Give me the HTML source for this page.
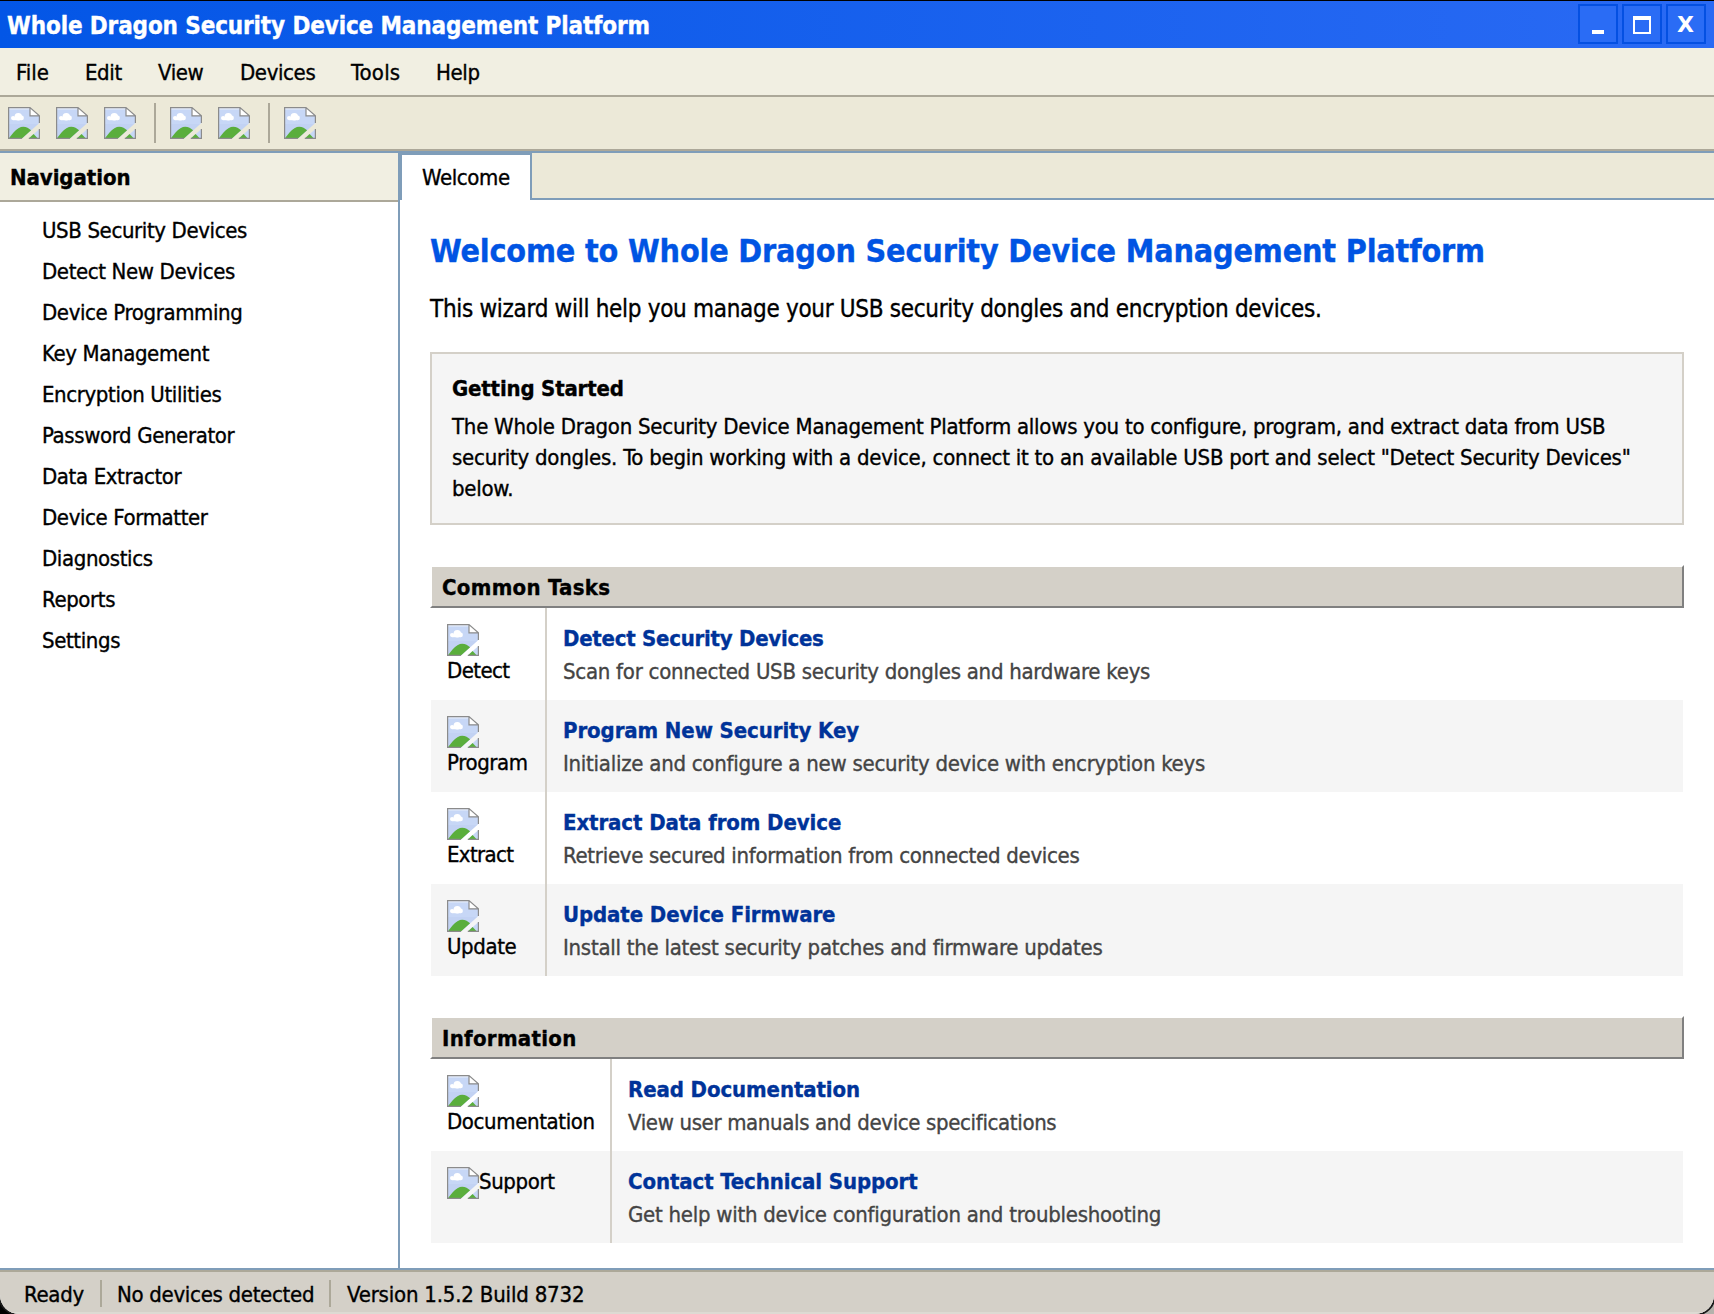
<!DOCTYPE html>
<html lang="en">
<head>
<meta charset="utf-8">
<title>Whole Dragon Security Device Management Platform</title>
<style>
*{box-sizing:border-box;margin:0;padding:0}
html,body{width:1714px;height:1314px;overflow:hidden;background:#000}
body{font-family:"DejaVu Sans Condensed","DejaVu Sans","Liberation Sans",sans-serif;font-stretch:condensed;font-size:22px;line-height:26px;color:#000;letter-spacing:-0.38px;-webkit-text-stroke:0.35px}
#win{position:absolute;left:0;top:0;width:1714px;height:1314px;background:#fff;overflow:hidden;border-radius:0 0 19px 19px;box-shadow:0 0 0 2px #1a1a1a}
.abs{position:absolute;white-space:nowrap}
b,.b{font-weight:bold}
/* title bar */
#title{position:absolute;left:0;top:1px;width:1714px;height:47px;background:linear-gradient(to right,#0356e6 0%,#2a6af4 100%)}
#title .txt{position:absolute;left:7px;top:11px;font-size:24px;line-height:28px;font-weight:bold;color:#fff;letter-spacing:-0.13px;white-space:nowrap;}
.wb{position:absolute;top:3px;width:40px;height:40px;border:2px solid #0450e2;background:#2a6cf5}
/* menu */
#menu{position:absolute;left:0;top:48px;width:1714px;height:49px;background:#f1efe2;border-bottom:2px solid #aca899}
#menu span{position:absolute;top:12px;line-height:26px;white-space:nowrap}
/* toolbar */
#tool{position:absolute;left:0;top:97px;width:1714px;height:54px;background:#ece9d8;border-bottom:2px solid #aca899}
#tool svg{position:absolute;top:10px;width:32px;height:32px}
#tool i{position:absolute;top:6px;width:2px;height:40px;background:#aca899}
/* main */
#main{position:absolute;left:0;top:151px;width:1714px;height:1117px;border-top:2px solid #7f9db9;background:#fff}
#nav{position:absolute;left:0;top:0;width:400px;height:1115px;border-right:2px solid #7f9db9;background:#fff}
#navh{position:absolute;left:0;top:0;width:398px;height:49px;background:#f1efe2;border-bottom:2px solid #aca899}
#navh span{position:absolute;left:10px;top:12px;font-weight:bold;white-space:nowrap;letter-spacing:-0.06px}
#nav ul{position:absolute;left:0;top:57px;list-style:none}
#nav li{height:41px;padding-left:42px;line-height:41px;white-space:nowrap}
#tabs{position:absolute;left:400px;top:0;width:1314px;height:47px;background:#ece9d8;border-bottom:2px solid #7f9db9}
#tab{position:absolute;left:400px;top:0;width:132px;height:47px;background:#fff;border:2px solid #7f9db9;border-bottom:none}
#tab span{position:absolute;left:20px;top:10px;white-space:nowrap}
#content{position:absolute;left:400px;top:47px;width:1314px;height:1068px;background:#fff}
/* status */
#status{position:absolute;left:0;top:1268px;width:1714px;height:46px;background:#d4d0c8;border-top:2px solid #7f9db9}
#status:before{content:"";position:absolute;left:0;top:0;width:100%;height:2px;background:#aca899}
#status:after{content:"";position:absolute;left:0;bottom:0;width:100%;height:2px;background:#dddad3}
#status span{position:absolute;top:12px;white-space:nowrap;letter-spacing:-0.3px}
#status i{position:absolute;top:10px;width:2px;height:27px;background:#aca899}

h1{font-size:32px;line-height:40px;font-weight:bold;color:#0054e3;letter-spacing:-0.18px}
.intro{font-size:24px;line-height:30px;letter-spacing:-0.3px}
#gs{position:absolute;left:30px;top:152px;width:1254px;height:173px;background:#f5f5f5;border:2px solid #d4d0c8}
.gsb{line-height:30.8px;letter-spacing:-0.25px}
.sh{position:absolute;left:30px;width:1254px;height:43px;background:#d4d0c8;border:2px solid;border-color:#fff #808080 #808080 #fff}
.sh span{position:absolute;left:10px;top:8px;font-weight:bold;white-space:nowrap;letter-spacing:0.3px}
.row{position:absolute;left:31px;width:1252px;height:92px;background:#fff}
.row.alt{background:#f5f5f5}
.ic{position:absolute;left:0;top:0;height:92px;border-right:2px solid #d4d0c8}
.ic svg{position:absolute;left:16px;top:16px;width:32px;height:32px}
.ic span{position:absolute;left:16px;top:50px;white-space:nowrap}
.tx{position:absolute;top:0;height:92px}
.tx b{position:absolute;left:16px;top:18px;color:#003399;white-space:nowrap;letter-spacing:-0.1px}
.tx span{position:absolute;left:16px;top:51px;color:#444;white-space:nowrap;letter-spacing:-0.26px}
</style>
</head>
<body>
<div style="position:absolute;right:0;bottom:0;width:24px;height:24px;background:#b4b2ac"></div>
<div id="win">
<div style="position:absolute;left:0;top:0;width:1714px;height:1px;background:#000"></div>
<div id="title"><div class="txt">Whole Dragon Security Device Management Platform</div>
<div class="wb" style="left:1578px"><div style="position:absolute;left:12px;top:24px;width:12px;height:4px;background:#fff"></div></div>
<div class="wb" style="left:1622px"><div style="position:absolute;left:9px;top:10px;width:18px;height:18px;border:2px solid #fff;border-top-width:4px"></div></div>
<div class="wb" style="left:1666px"><div style="position:absolute;left:9px;top:6px;font-family:'DejaVu Sans',sans-serif;font-stretch:normal;font-size:22px;line-height:26px;font-weight:bold;color:#fff;letter-spacing:0;-webkit-text-stroke:0">X</div></div>
</div>
<div id="menu">
<span style="left:16px;letter-spacing:0px">File</span><span style="left:85px">Edit</span><span style="left:158px">View</span><span style="left:240px">Devices</span><span style="left:351px;letter-spacing:0.2px">Tools</span><span style="left:436px">Help</span>
</div>
<div id="tool">
<svg style="left:8px" viewBox="0 0 32 32"><path d="M0.6,0.6 H22 L31.4,8.8 V15.9 L13.9,31.4 H0.6 Z" fill="#c7d7f6"/><path d="M31.4,22 V31.4 H20.8 Z" fill="#c7d7f6"/><path d="M1,17 H30 L14,31.4 H1 Z" fill="#b9c9ef" opacity="0.35"/><path d="M1.2,1.2 H21.5 V2.4 H1.2 Z" fill="#eef3fd"/><g fill="#fff"><circle cx="5.1" cy="11.1" r="2.1"/><circle cx="10.3" cy="9.8" r="3.8"/><circle cx="13.6" cy="10.9" r="2.3"/><rect x="5.1" y="11" width="8.5" height="2.2"/></g><path d="M0.8,31.4 C5,26.4 9,20 15.2,19.8 C18.4,19.8 21,21.4 23.1,23.3 L13.9,31.4 Z" fill="#5aae3c"/><path d="M20.8,31.4 L25.6,27.1 L29.9,31.4 Z" fill="#5aae3c"/><path d="M22,0.6 V8.8 H31.4 Z" fill="#fff"/><path d="M13.9,31.4 H0.6 V0.6 H22 L31.4,8.8 V15.9 M22,0.6 V8.8 H31.4 M31.4,22 V31.4 H20.8" fill="none" stroke="#8b8b8b" stroke-width="1.2"/></svg><svg style="left:56px" viewBox="0 0 32 32"><path d="M0.6,0.6 H22 L31.4,8.8 V15.9 L13.9,31.4 H0.6 Z" fill="#c7d7f6"/><path d="M31.4,22 V31.4 H20.8 Z" fill="#c7d7f6"/><path d="M1,17 H30 L14,31.4 H1 Z" fill="#b9c9ef" opacity="0.35"/><path d="M1.2,1.2 H21.5 V2.4 H1.2 Z" fill="#eef3fd"/><g fill="#fff"><circle cx="5.1" cy="11.1" r="2.1"/><circle cx="10.3" cy="9.8" r="3.8"/><circle cx="13.6" cy="10.9" r="2.3"/><rect x="5.1" y="11" width="8.5" height="2.2"/></g><path d="M0.8,31.4 C5,26.4 9,20 15.2,19.8 C18.4,19.8 21,21.4 23.1,23.3 L13.9,31.4 Z" fill="#5aae3c"/><path d="M20.8,31.4 L25.6,27.1 L29.9,31.4 Z" fill="#5aae3c"/><path d="M22,0.6 V8.8 H31.4 Z" fill="#fff"/><path d="M13.9,31.4 H0.6 V0.6 H22 L31.4,8.8 V15.9 M22,0.6 V8.8 H31.4 M31.4,22 V31.4 H20.8" fill="none" stroke="#8b8b8b" stroke-width="1.2"/></svg><svg style="left:104px" viewBox="0 0 32 32"><path d="M0.6,0.6 H22 L31.4,8.8 V15.9 L13.9,31.4 H0.6 Z" fill="#c7d7f6"/><path d="M31.4,22 V31.4 H20.8 Z" fill="#c7d7f6"/><path d="M1,17 H30 L14,31.4 H1 Z" fill="#b9c9ef" opacity="0.35"/><path d="M1.2,1.2 H21.5 V2.4 H1.2 Z" fill="#eef3fd"/><g fill="#fff"><circle cx="5.1" cy="11.1" r="2.1"/><circle cx="10.3" cy="9.8" r="3.8"/><circle cx="13.6" cy="10.9" r="2.3"/><rect x="5.1" y="11" width="8.5" height="2.2"/></g><path d="M0.8,31.4 C5,26.4 9,20 15.2,19.8 C18.4,19.8 21,21.4 23.1,23.3 L13.9,31.4 Z" fill="#5aae3c"/><path d="M20.8,31.4 L25.6,27.1 L29.9,31.4 Z" fill="#5aae3c"/><path d="M22,0.6 V8.8 H31.4 Z" fill="#fff"/><path d="M13.9,31.4 H0.6 V0.6 H22 L31.4,8.8 V15.9 M22,0.6 V8.8 H31.4 M31.4,22 V31.4 H20.8" fill="none" stroke="#8b8b8b" stroke-width="1.2"/></svg>
<i style="left:154px"></i>
<svg style="left:170px" viewBox="0 0 32 32"><path d="M0.6,0.6 H22 L31.4,8.8 V15.9 L13.9,31.4 H0.6 Z" fill="#c7d7f6"/><path d="M31.4,22 V31.4 H20.8 Z" fill="#c7d7f6"/><path d="M1,17 H30 L14,31.4 H1 Z" fill="#b9c9ef" opacity="0.35"/><path d="M1.2,1.2 H21.5 V2.4 H1.2 Z" fill="#eef3fd"/><g fill="#fff"><circle cx="5.1" cy="11.1" r="2.1"/><circle cx="10.3" cy="9.8" r="3.8"/><circle cx="13.6" cy="10.9" r="2.3"/><rect x="5.1" y="11" width="8.5" height="2.2"/></g><path d="M0.8,31.4 C5,26.4 9,20 15.2,19.8 C18.4,19.8 21,21.4 23.1,23.3 L13.9,31.4 Z" fill="#5aae3c"/><path d="M20.8,31.4 L25.6,27.1 L29.9,31.4 Z" fill="#5aae3c"/><path d="M22,0.6 V8.8 H31.4 Z" fill="#fff"/><path d="M13.9,31.4 H0.6 V0.6 H22 L31.4,8.8 V15.9 M22,0.6 V8.8 H31.4 M31.4,22 V31.4 H20.8" fill="none" stroke="#8b8b8b" stroke-width="1.2"/></svg><svg style="left:218px" viewBox="0 0 32 32"><path d="M0.6,0.6 H22 L31.4,8.8 V15.9 L13.9,31.4 H0.6 Z" fill="#c7d7f6"/><path d="M31.4,22 V31.4 H20.8 Z" fill="#c7d7f6"/><path d="M1,17 H30 L14,31.4 H1 Z" fill="#b9c9ef" opacity="0.35"/><path d="M1.2,1.2 H21.5 V2.4 H1.2 Z" fill="#eef3fd"/><g fill="#fff"><circle cx="5.1" cy="11.1" r="2.1"/><circle cx="10.3" cy="9.8" r="3.8"/><circle cx="13.6" cy="10.9" r="2.3"/><rect x="5.1" y="11" width="8.5" height="2.2"/></g><path d="M0.8,31.4 C5,26.4 9,20 15.2,19.8 C18.4,19.8 21,21.4 23.1,23.3 L13.9,31.4 Z" fill="#5aae3c"/><path d="M20.8,31.4 L25.6,27.1 L29.9,31.4 Z" fill="#5aae3c"/><path d="M22,0.6 V8.8 H31.4 Z" fill="#fff"/><path d="M13.9,31.4 H0.6 V0.6 H22 L31.4,8.8 V15.9 M22,0.6 V8.8 H31.4 M31.4,22 V31.4 H20.8" fill="none" stroke="#8b8b8b" stroke-width="1.2"/></svg>
<i style="left:268px"></i>
<svg style="left:284px" viewBox="0 0 32 32"><path d="M0.6,0.6 H22 L31.4,8.8 V15.9 L13.9,31.4 H0.6 Z" fill="#c7d7f6"/><path d="M31.4,22 V31.4 H20.8 Z" fill="#c7d7f6"/><path d="M1,17 H30 L14,31.4 H1 Z" fill="#b9c9ef" opacity="0.35"/><path d="M1.2,1.2 H21.5 V2.4 H1.2 Z" fill="#eef3fd"/><g fill="#fff"><circle cx="5.1" cy="11.1" r="2.1"/><circle cx="10.3" cy="9.8" r="3.8"/><circle cx="13.6" cy="10.9" r="2.3"/><rect x="5.1" y="11" width="8.5" height="2.2"/></g><path d="M0.8,31.4 C5,26.4 9,20 15.2,19.8 C18.4,19.8 21,21.4 23.1,23.3 L13.9,31.4 Z" fill="#5aae3c"/><path d="M20.8,31.4 L25.6,27.1 L29.9,31.4 Z" fill="#5aae3c"/><path d="M22,0.6 V8.8 H31.4 Z" fill="#fff"/><path d="M13.9,31.4 H0.6 V0.6 H22 L31.4,8.8 V15.9 M22,0.6 V8.8 H31.4 M31.4,22 V31.4 H20.8" fill="none" stroke="#8b8b8b" stroke-width="1.2"/></svg>
</div>
<div id="main">
<div id="nav">
<div id="navh"><span>Navigation</span></div>
<ul>
<li>USB Security Devices</li>
<li>Detect New Devices</li>
<li>Device Programming</li>
<li>Key Management</li>
<li>Encryption Utilities</li>
<li>Password Generator</li>
<li>Data Extractor</li>
<li>Device Formatter</li>
<li>Diagnostics</li>
<li>Reports</li>
<li>Settings</li>
</ul>
</div>
<div id="tabs"></div>
<div id="tab"><span>Welcome</span></div>
<div id="content">

<h1 class="abs" style="left:30px;top:31px">Welcome to Whole Dragon Security Device Management Platform</h1>
<p class="abs intro" style="left:30px;top:94px">This wizard will help you manage your USB security dongles and encryption devices.</p>
<div id="gs">
<div class="abs b" style="left:20px;top:22px;letter-spacing:-0.18px">Getting Started</div>
<div class="abs gsb" style="left:20px;top:58px">The Whole Dragon Security Device Management Platform allows you to configure, program, and extract data from USB<br>security dongles. To begin working with a device, connect it to an available USB port and select "Detect Security Devices"<br>below.</div>
</div>
<div class="sh" style="top:365px"><span>Common Tasks</span></div>
<div class="row" style="top:408px"><div class="ic" style="width:116px"><svg viewBox="0 0 32 32"><path d="M0.6,0.6 H22 L31.4,8.8 V15.9 L13.9,31.4 H0.6 Z" fill="#c7d7f6"/><path d="M31.4,22 V31.4 H20.8 Z" fill="#c7d7f6"/><path d="M1,17 H30 L14,31.4 H1 Z" fill="#b9c9ef" opacity="0.35"/><path d="M1.2,1.2 H21.5 V2.4 H1.2 Z" fill="#eef3fd"/><g fill="#fff"><circle cx="5.1" cy="11.1" r="2.1"/><circle cx="10.3" cy="9.8" r="3.8"/><circle cx="13.6" cy="10.9" r="2.3"/><rect x="5.1" y="11" width="8.5" height="2.2"/></g><path d="M0.8,31.4 C5,26.4 9,20 15.2,19.8 C18.4,19.8 21,21.4 23.1,23.3 L13.9,31.4 Z" fill="#5aae3c"/><path d="M20.8,31.4 L25.6,27.1 L29.9,31.4 Z" fill="#5aae3c"/><path d="M22,0.6 V8.8 H31.4 Z" fill="#fff"/><path d="M13.9,31.4 H0.6 V0.6 H22 L31.4,8.8 V15.9 M22,0.6 V8.8 H31.4 M31.4,22 V31.4 H20.8" fill="none" stroke="#8b8b8b" stroke-width="1.2"/></svg><span style="letter-spacing:-0.58px">Detect</span></div><div class="tx" style="left:116px"><b style="letter-spacing:-0.26px">Detect Security Devices</b><span>Scan for connected USB security dongles and hardware keys</span></div></div>
<div class="row alt" style="top:500px"><div class="ic" style="width:116px"><svg viewBox="0 0 32 32"><path d="M0.6,0.6 H22 L31.4,8.8 V15.9 L13.9,31.4 H0.6 Z" fill="#c7d7f6"/><path d="M31.4,22 V31.4 H20.8 Z" fill="#c7d7f6"/><path d="M1,17 H30 L14,31.4 H1 Z" fill="#b9c9ef" opacity="0.35"/><path d="M1.2,1.2 H21.5 V2.4 H1.2 Z" fill="#eef3fd"/><g fill="#fff"><circle cx="5.1" cy="11.1" r="2.1"/><circle cx="10.3" cy="9.8" r="3.8"/><circle cx="13.6" cy="10.9" r="2.3"/><rect x="5.1" y="11" width="8.5" height="2.2"/></g><path d="M0.8,31.4 C5,26.4 9,20 15.2,19.8 C18.4,19.8 21,21.4 23.1,23.3 L13.9,31.4 Z" fill="#5aae3c"/><path d="M20.8,31.4 L25.6,27.1 L29.9,31.4 Z" fill="#5aae3c"/><path d="M22,0.6 V8.8 H31.4 Z" fill="#fff"/><path d="M13.9,31.4 H0.6 V0.6 H22 L31.4,8.8 V15.9 M22,0.6 V8.8 H31.4 M31.4,22 V31.4 H20.8" fill="none" stroke="#8b8b8b" stroke-width="1.2"/></svg><span>Program</span></div><div class="tx" style="left:116px"><b>Program New Security Key</b><span>Initialize and configure a new security device with encryption keys</span></div></div>
<div class="row" style="top:592px"><div class="ic" style="width:116px"><svg viewBox="0 0 32 32"><path d="M0.6,0.6 H22 L31.4,8.8 V15.9 L13.9,31.4 H0.6 Z" fill="#c7d7f6"/><path d="M31.4,22 V31.4 H20.8 Z" fill="#c7d7f6"/><path d="M1,17 H30 L14,31.4 H1 Z" fill="#b9c9ef" opacity="0.35"/><path d="M1.2,1.2 H21.5 V2.4 H1.2 Z" fill="#eef3fd"/><g fill="#fff"><circle cx="5.1" cy="11.1" r="2.1"/><circle cx="10.3" cy="9.8" r="3.8"/><circle cx="13.6" cy="10.9" r="2.3"/><rect x="5.1" y="11" width="8.5" height="2.2"/></g><path d="M0.8,31.4 C5,26.4 9,20 15.2,19.8 C18.4,19.8 21,21.4 23.1,23.3 L13.9,31.4 Z" fill="#5aae3c"/><path d="M20.8,31.4 L25.6,27.1 L29.9,31.4 Z" fill="#5aae3c"/><path d="M22,0.6 V8.8 H31.4 Z" fill="#fff"/><path d="M13.9,31.4 H0.6 V0.6 H22 L31.4,8.8 V15.9 M22,0.6 V8.8 H31.4 M31.4,22 V31.4 H20.8" fill="none" stroke="#8b8b8b" stroke-width="1.2"/></svg><span style="letter-spacing:-0.66px">Extract</span></div><div class="tx" style="left:116px"><b>Extract Data from Device</b><span style="letter-spacing:-0.29px">Retrieve secured information from connected devices</span></div></div>
<div class="row alt" style="top:684px"><div class="ic" style="width:116px"><svg viewBox="0 0 32 32"><path d="M0.6,0.6 H22 L31.4,8.8 V15.9 L13.9,31.4 H0.6 Z" fill="#c7d7f6"/><path d="M31.4,22 V31.4 H20.8 Z" fill="#c7d7f6"/><path d="M1,17 H30 L14,31.4 H1 Z" fill="#b9c9ef" opacity="0.35"/><path d="M1.2,1.2 H21.5 V2.4 H1.2 Z" fill="#eef3fd"/><g fill="#fff"><circle cx="5.1" cy="11.1" r="2.1"/><circle cx="10.3" cy="9.8" r="3.8"/><circle cx="13.6" cy="10.9" r="2.3"/><rect x="5.1" y="11" width="8.5" height="2.2"/></g><path d="M0.8,31.4 C5,26.4 9,20 15.2,19.8 C18.4,19.8 21,21.4 23.1,23.3 L13.9,31.4 Z" fill="#5aae3c"/><path d="M20.8,31.4 L25.6,27.1 L29.9,31.4 Z" fill="#5aae3c"/><path d="M22,0.6 V8.8 H31.4 Z" fill="#fff"/><path d="M13.9,31.4 H0.6 V0.6 H22 L31.4,8.8 V15.9 M22,0.6 V8.8 H31.4 M31.4,22 V31.4 H20.8" fill="none" stroke="#8b8b8b" stroke-width="1.2"/></svg><span>Update</span></div><div class="tx" style="left:116px"><b>Update Device Firmware</b><span>Install the latest security patches and firmware updates</span></div></div>
<div class="sh" style="top:816px"><span>Information</span></div>
<div class="row" style="top:859px"><div class="ic" style="width:181px"><svg viewBox="0 0 32 32"><path d="M0.6,0.6 H22 L31.4,8.8 V15.9 L13.9,31.4 H0.6 Z" fill="#c7d7f6"/><path d="M31.4,22 V31.4 H20.8 Z" fill="#c7d7f6"/><path d="M1,17 H30 L14,31.4 H1 Z" fill="#b9c9ef" opacity="0.35"/><path d="M1.2,1.2 H21.5 V2.4 H1.2 Z" fill="#eef3fd"/><g fill="#fff"><circle cx="5.1" cy="11.1" r="2.1"/><circle cx="10.3" cy="9.8" r="3.8"/><circle cx="13.6" cy="10.9" r="2.3"/><rect x="5.1" y="11" width="8.5" height="2.2"/></g><path d="M0.8,31.4 C5,26.4 9,20 15.2,19.8 C18.4,19.8 21,21.4 23.1,23.3 L13.9,31.4 Z" fill="#5aae3c"/><path d="M20.8,31.4 L25.6,27.1 L29.9,31.4 Z" fill="#5aae3c"/><path d="M22,0.6 V8.8 H31.4 Z" fill="#fff"/><path d="M13.9,31.4 H0.6 V0.6 H22 L31.4,8.8 V15.9 M22,0.6 V8.8 H31.4 M31.4,22 V31.4 H20.8" fill="none" stroke="#8b8b8b" stroke-width="1.2"/></svg><span>Documentation</span></div><div class="tx" style="left:181px"><b>Read Documentation</b><span style="letter-spacing:-0.35px">View user manuals and device specifications</span></div></div>
<div class="row alt" style="top:951px"><div class="ic" style="width:181px"><svg viewBox="0 0 32 32"><path d="M0.6,0.6 H22 L31.4,8.8 V15.9 L13.9,31.4 H0.6 Z" fill="#c7d7f6"/><path d="M31.4,22 V31.4 H20.8 Z" fill="#c7d7f6"/><path d="M1,17 H30 L14,31.4 H1 Z" fill="#b9c9ef" opacity="0.35"/><path d="M1.2,1.2 H21.5 V2.4 H1.2 Z" fill="#eef3fd"/><g fill="#fff"><circle cx="5.1" cy="11.1" r="2.1"/><circle cx="10.3" cy="9.8" r="3.8"/><circle cx="13.6" cy="10.9" r="2.3"/><rect x="5.1" y="11" width="8.5" height="2.2"/></g><path d="M0.8,31.4 C5,26.4 9,20 15.2,19.8 C18.4,19.8 21,21.4 23.1,23.3 L13.9,31.4 Z" fill="#5aae3c"/><path d="M20.8,31.4 L25.6,27.1 L29.9,31.4 Z" fill="#5aae3c"/><path d="M22,0.6 V8.8 H31.4 Z" fill="#fff"/><path d="M13.9,31.4 H0.6 V0.6 H22 L31.4,8.8 V15.9 M22,0.6 V8.8 H31.4 M31.4,22 V31.4 H20.8" fill="none" stroke="#8b8b8b" stroke-width="1.2"/></svg><span style="left:48px;top:18px">Support</span></div><div class="tx" style="left:181px"><b>Contact Technical Support</b><span>Get help with device configuration and troubleshooting</span></div></div>

</div>
</div>
<div id="status">
<span style="left:24px">Ready</span><i style="left:100px"></i>
<span style="left:117px">No devices detected</span><i style="left:329px"></i>
<span style="left:347px;letter-spacing:-0.19px">Version 1.5.2 Build 8732</span>
</div>
</div>
</body>
</html>
